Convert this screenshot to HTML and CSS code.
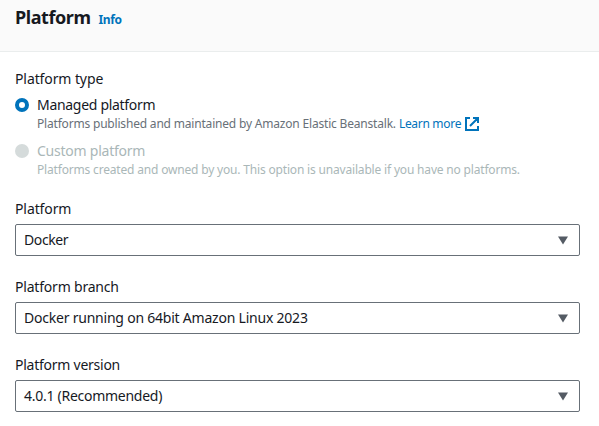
FILE: index.html
```html
<!DOCTYPE html>
<html lang="en">
<head>
<meta charset="utf-8">
<title>Platform</title>
<link rel="stylesheet" href="styles.css">
</head>
<body>
<header class="panel-header">
  <h2 class="title">Platform</h2>
  <a class="info">Info</a>
</header>
<main class="content">
  <div class="label type-label">Platform type</div>
  <div class="option">
    <span class="radio checked"></span>
    <div>
      <div class="name managed">Managed platform</div>
      <div class="desc"><span class="published">Platforms published and maintained by Amazon Elastic Beanstalk.</span> <a class="learn">Learn more</a><svg class="external" viewBox="0 0 14 14"><path d="M5 1H1v12h12V9M8 1h5v5M12.500 1.500 5 9"/></svg></div>
    </div>
  </div>
  <div class="option disabled">
    <span class="radio"></span>
    <div>
      <div class="name custom">Custom platform</div>
      <div class="desc">Platforms created and owned by you. This option is unavailable if you have no platforms.</div>
    </div>
  </div>
  <div class="field">
    <div class="label">Platform</div>
    <div class="select"><span class="short">Docker</span><svg class="caret" viewBox="0 0 12 9"><path d="M1 .5h10L6 8.500z"/></svg></div>
  </div>
  <div class="field">
    <div class="label branch">Platform branch</div>
    <div class="select"><span>Docker running on 64bit Amazon Linux 2023</span><svg class="caret" viewBox="0 0 12 9"><path d="M1 .5h10L6 8.500z"/></svg></div>
  </div>
  <div class="field">
    <div class="label version">Platform version</div>
    <div class="select"><span class="version-value">4.0.1 (Recommended)</span><svg class="caret" viewBox="0 0 12 9"><path d="M1 .5h10L6 8.500z"/></svg></div>
  </div>
</main>
</body>
</html>
```
FILE: styles.css
```css
* { box-sizing: border-box; }
body { margin: 0; background: #fff; color: #16191f; font: 14px/22px "Noto Sans", sans-serif; overflow: hidden; }
.panel-header { height: 52px; padding: 6px 15px 0; display: flex; gap: 8px; background: #fafafa; border-bottom: 1px solid #eaeded; }
.title { margin: 0; font-size: 18px; line-height: 22px; font-weight: 700; letter-spacing: -.42px; }
.info { color: #0073bb; font-size: 12px; font-weight: 700; line-height: 28px; letter-spacing: -.4px; }
.content { padding: 16px 15px 0; }
.type-label { margin-bottom: 4px; }
.option { display: flex; gap: 8px; height: 46px; }
.radio { width: 14px; height: 14px; margin-top: 4px; border-radius: 50%; background: #d5dbdb; flex: none; }
.radio.checked { background: #fff; border: 4px solid #0073bb; }
.name { line-height: 22px; }
.managed { letter-spacing: -.3px; }
.custom { letter-spacing: -.24px; }
.desc { display: flex; align-items: center; color: #687078; font-size: 12px; line-height: 16px; white-space: nowrap; letter-spacing: -.178px; }
.published { letter-spacing: -.19px; }
.learn { color: #0073bb; margin-left: 3px; letter-spacing: -.3px; }
.external { width: 14px; height: 14px; margin-left: 4px; fill: none; stroke: #0073bb; stroke-width: 2; }
.disabled, .disabled .desc { color: #aab7b8; }
.field { margin-bottom: 20px; }
.option + .field { margin-top: 12px; }
.label { line-height: 22px; letter-spacing: -.1px; }
.branch { letter-spacing: -.2px; }
.version { letter-spacing: -.25px; }
.select { height: 32px; margin-top: 4px; border: 1px solid #687078; border-radius: 2px; padding: 0 10px 0 8px; width: 565px; display: flex; align-items: center; justify-content: space-between; letter-spacing: -.22px; }
.short { letter-spacing: -.4px; }
.version-value { letter-spacing: -.27px; }
.caret { width: 12px; height: 9px; fill: #545b64; }
```
